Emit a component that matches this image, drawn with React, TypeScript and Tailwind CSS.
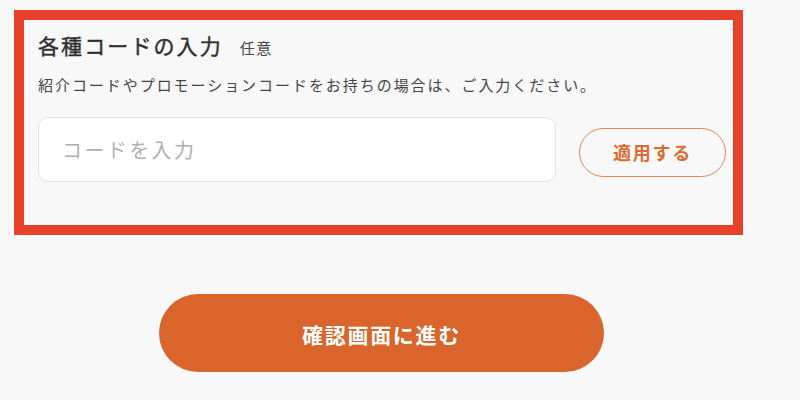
const font = { fontFamily: '"Noto Sans CJK JP", "Noto Sans", sans-serif' };

export default function App() {
  return (
    <div className="min-h-[400px] w-[800px] bg-[#f8f8f8] pt-[10px]" style={font}>
      <section className="ml-[14px] h-[225px] w-[729px] border-[10px] border-[#e8412a] pl-[14px] pr-[7px] pt-[10px]">
        <div className="flex items-baseline">
          <h2 className="text-[21px] leading-[30px] font-normal tracking-[0.1em] text-[#2f2f2f] [-webkit-text-stroke:0.4px_#2f2f2f]">
            各種コードの入力
          </h2>
          <span className="ml-[17px] text-[15px] tracking-[0.1em] text-[#444444]">任意</span>
        </div>
        <p className="mt-[13px] text-[15px] leading-[24px] tracking-[0.13em] text-[#444444]">
          紹介コードやプロモーションコードをお持ちの場合は、ご入力ください。
        </p>
        <div className="mt-[20px] flex items-start justify-between">
          <input
            type="text"
            placeholder="コードを入力"
            className="h-[65px] w-[518px] rounded-[10px] border border-[#e2e2e2] bg-white px-[23px] text-[20px] tracking-[0.12em] text-[#333333] placeholder:text-[#b0b0b0] outline-none"
            style={font}
          />
          <button
            className="mt-[11px] h-[49px] w-[147px] rounded-full border-[1.5px] border-[#e5824f] text-[18px] font-bold tracking-[0.1em] text-[#dd6a33]"
            style={font}
          >
            適用する
          </button>
        </div>
      </section>
      <button
        className="ml-[159px] mt-[59px] flex h-[78px] w-[445px] items-center justify-center rounded-full bg-[#d9652c] pt-[3px] text-[21px] font-bold tracking-[0.08em] text-white"
        style={font}
      >
        確認画面に進む
      </button>
    </div>
  );
}
